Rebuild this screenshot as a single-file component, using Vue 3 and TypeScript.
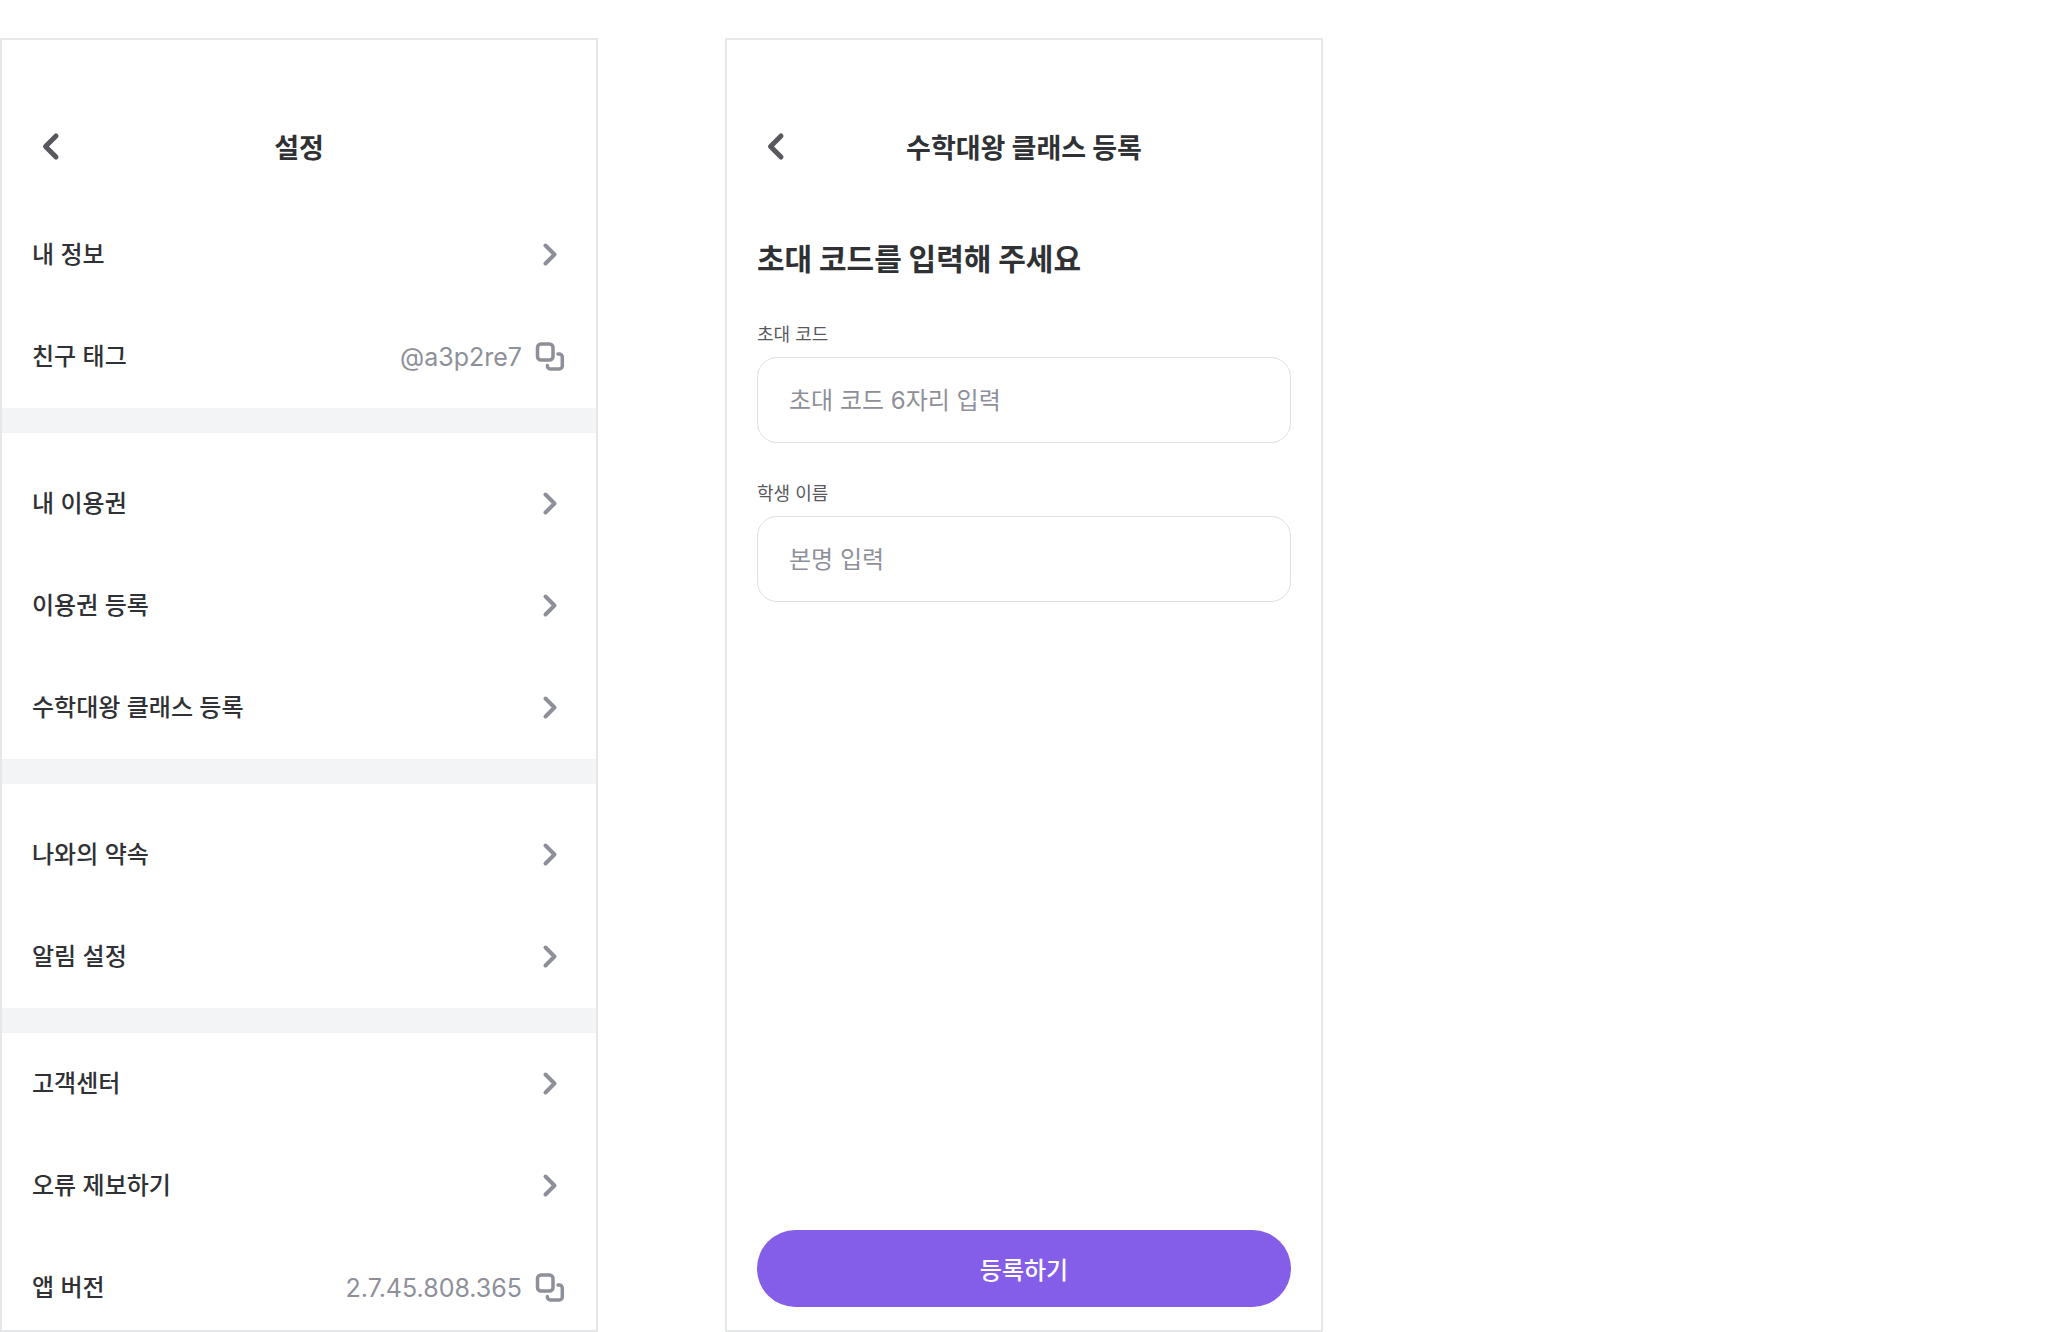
<script setup lang="ts">
import { ref } from 'vue'

interface SettingItem {
  label: string
  value?: string
}

const groups: SettingItem[][] = [
  [{ label: '내 정보' }, { label: '친구 태그', value: '@a3p2re7' }],
  [{ label: '내 이용권' }, { label: '이용권 등록' }, { label: '수학대왕 클래스 등록' }],
  [{ label: '나와의 약속' }, { label: '알림 설정' }],
  [{ label: '고객센터' }, { label: '오류 제보하기' }, { label: '앱 버전', value: '2.7.45.808.365' }],
]

const inviteCode = ref('')
const studentName = ref('')

function copy(text: string) {
  navigator.clipboard?.writeText(text)
}
</script>

<template>
  <main class="page">
    <section class="panel">
      <header class="header">
        <button class="back" type="button" aria-label="뒤로">
          <svg width="32" height="32" viewBox="0 0 32 32"><path d="M24 5 13.500 15.500 24 26" /></svg>
        </button>
        <h1 class="title">설정</h1>
      </header>
      <ul v-for="(group, index) in groups" :key="index" class="group">
        <li v-for="item in group" :key="item.label">
          <div v-if="item.value" class="row">
            <span>{{ item.label }}</span>
            <span class="value">
              {{ item.value }}
              <button class="copy" type="button" aria-label="복사" @click="copy(item.value)">
                <svg width="32" height="32" viewBox="0 0 32 32">
                  <rect x="3.500" y="3" width="15.500" height="16" rx="3.500" />
                  <path d="M24 13h1.300a3 3 0 0 1 3 3V25a3 3 0 0 1-3 3H16.400a3 3 0 0 1-3-3v-.500" />
                </svg>
              </button>
            </span>
          </div>
          <a v-else class="row" href="#">
            <span>{{ item.label }}</span>
            <svg width="32" height="32" viewBox="0 0 32 32"><path d="M11.500 6.500 20.500 15.500 11.500 24.500" /></svg>
          </a>
        </li>
      </ul>
    </section>

    <section class="panel">
      <header class="header">
        <button class="back" type="button" aria-label="뒤로">
          <svg width="32" height="32" viewBox="0 0 32 32"><path d="M24 5 13.500 15.500 24 26" /></svg>
        </button>
        <h1 class="title">수학대왕 클래스 등록</h1>
      </header>
      <form class="form" @submit.prevent>
        <h2 class="heading">초대 코드를 입력해 주세요</h2>
        <div class="field">
          <label for="invite-code">초대 코드</label>
          <input id="invite-code" v-model="inviteCode" type="text" placeholder="초대 코드 6자리 입력" />
        </div>
        <div class="field">
          <label for="student-name">학생 이름</label>
          <input id="student-name" v-model="studentName" type="text" placeholder="본명 입력" />
        </div>
        <button class="submit" type="submit">등록하기</button>
      </form>
    </section>
  </main>
</template>

<style>
body {
  margin: 0;
  background: #fff;
}
</style>

<style scoped>
.page {
  box-sizing: border-box;
  min-height: 100vh;
  padding-top: 38px;
  display: grid;
  grid-template-columns: minmax(0, 598px) minmax(0, 598px);
  column-gap: 127px;
  font-family: Inter, 'Noto Sans CJK KR', sans-serif;
  color: #303135;
}

.panel {
  box-sizing: border-box;
  display: flex;
  flex-direction: column;
  border: 2px solid #e6e7e9;
  background: #fff;
}

.header {
  display: grid;
  grid-template-columns: 32px 1fr 32px;
  align-items: center;
  padding: 87px 30px 37px;
}

.title {
  margin: 0;
  font-family: 'Noto Sans CJK KR', sans-serif;
  font-size: 27px;
  line-height: 40px;
  font-weight: 700;
  text-align: center;
}

svg {
  display: block;
  flex: none;
  fill: none;
  stroke: #8e9099;
  stroke-width: 4;
  stroke-linecap: round;
  stroke-linejoin: round;
}

.back,
.copy {
  padding: 0;
  border: 0;
  background: none;
  cursor: pointer;
}

.back svg {
  stroke: #58595e;
  stroke-width: 5;
}

.copy svg {
  stroke-width: 3.5;
}

.group {
  margin: 0;
  padding: 0;
  list-style: none;
}

.group:not(:last-child) {
  border-bottom: 25px solid #f3f4f6;
}

.group:nth-of-type(2),
.group:nth-of-type(3) {
  padding-top: 20px;
}

.row {
  display: flex;
  align-items: center;
  justify-content: space-between;
  padding: 35px 30px;
  font-size: 24px;
  line-height: 32px;
  font-weight: 500;
  color: inherit;
  text-decoration: none;
}

.group:last-child li:last-child .row {
  padding-bottom: 24px;
}

.value {
  display: flex;
  align-items: center;
  gap: 12px;
  font-size: 25px;
  font-weight: 400;
  color: #8e9099;
}

.form {
  flex: 1;
  display: flex;
  flex-direction: column;
  padding: 31px 30px 23px;
}

.heading {
  margin: 0 0 42px;
  font-family: 'Noto Sans CJK KR', sans-serif;
  font-size: 30px;
  line-height: 44px;
  font-weight: 700;
}

.field {
  display: flex;
  flex-direction: column;
  gap: 8px;
  margin-bottom: 37px;
}

.field label {
  font-size: 18px;
  line-height: 28px;
  color: #58595e;
}

.field input {
  box-sizing: border-box;
  width: 100%;
  height: 86px;
  padding: 0 31px;
  border: 1px solid #dfe0e3;
  border-radius: 20px;
  outline: none;
  background: #fff;
  font-family: inherit;
  font-size: 24px;
  color: #303135;
}

.field input::placeholder {
  color: #8e9099;
  opacity: 1;
}

.submit {
  height: 77px;
  margin-top: auto;
  border: 0;
  border-radius: 39px;
  background: #845ee9;
  color: #fff;
  font-family: inherit;
  font-size: 24px;
  font-weight: 500;
  cursor: pointer;
}
</style>
